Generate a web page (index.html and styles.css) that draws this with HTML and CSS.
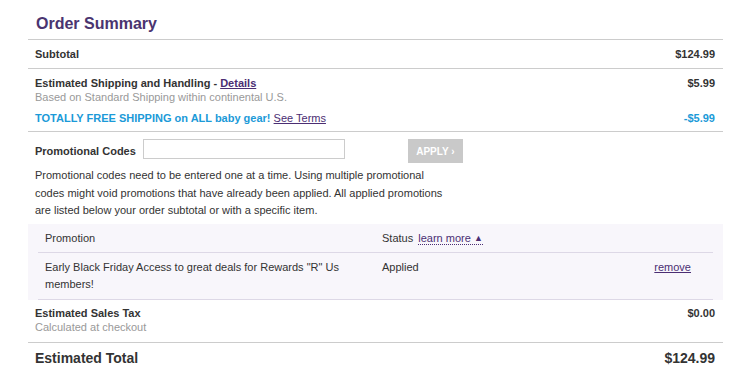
FILE: index.html
```html
<!DOCTYPE html>
<html lang="en">
<head>
    <meta charset="UTF-8">
    <title>Order Summary</title>
    <link rel="stylesheet" href="styles.css">
</head>
<body>
    <div class="summary">
        <h1>Order Summary</h1>

        <div class="row">
            <div class="row-label">Subtotal</div>
            <div class="row-value">$124.99</div>
        </div>

        <div class="row row-shipping">
            <div>
                <div class="row-label">Estimated Shipping and Handling - <a href="#" class="link-bold">Details</a></div>
                <div class="row-note">Based on Standard Shipping within continental U.S.</div>
            </div>
            <div class="row-value">$5.99</div>
        </div>
        <div class="row row-free">
            <div class="free-text">TOTALLY FREE SHIPPING on ALL baby gear! <a href="#" class="link">See Terms</a></div>
            <div class="row-value free-text">-$5.99</div>
        </div>

        <div class="promo">
            <div class="promo-form">
                <label for="promoCode" class="row-label promo-label">Promotional Codes</label>
                <input type="text" id="promoCode">
                <button type="button" class="apply-btn">APPLY ›</button>
            </div>
            <p class="promo-info">Promotional codes need to be entered one at a time. Using multiple promotional codes might void promotions that have already been applied. All applied promotions are listed below your order subtotal or with a specific item.</p>
        </div>

        <div class="promo-box">
            <div class="promo-row promo-head">
                <div>Promotion</div>
                <div>Status <a href="#" class="learn-more">learn more <span class="caret">&#9650;</span></a></div>
                <div></div>
            </div>
            <div class="promo-row promo-item">
                <div>Early Black Friday Access to great deals for Rewards "R" Us members!</div>
                <div>Applied</div>
                <div><a href="#" class="link">remove</a></div>
            </div>
        </div>

        <div class="row row-tax">
            <div>
                <div class="row-label">Estimated Sales Tax</div>
                <div class="row-note">Calculated at checkout</div>
            </div>
            <div class="row-value">$0.00</div>
        </div>

        <div class="row row-total">
            <div>Estimated Total</div>
            <div>$124.99</div>
        </div>
    </div>
</body>
</html>
```

FILE: styles.css
```css
body {
    margin: 0;
    font-family: "Liberation Sans", Arial, sans-serif;
    font-size: 11px;
    color: #333;
    background: #fff;
}
.summary {
    width: 695px;
    margin-left: 28px;
}
h1 {
    margin: 0;
    padding: 13px 8px 4px;
    height: 22px;
    line-height: 22px;
    font-size: 16px;
    font-weight: bold;
    color: #4a3470;
    border-bottom: 1px solid #ccc;
}
.row {
    display: flex;
    justify-content: space-between;
    padding: 7px 8px 7px 7px;
    line-height: 14px;
    border-bottom: 1px solid #ccc;
}
.row-label {
    font-weight: bold;
}
.row-value {
    font-weight: bold;
}
.row-note {
    color: #999;
}
.row-shipping {
    border-bottom: none;
    padding-bottom: 0;
}
.row-free {
    padding-bottom: 6px;
}
.free-text {
    color: #1b9ad8;
    font-weight: bold;
}
.link,
.link-bold {
    color: #4b2e73;
    text-decoration: underline;
}
.link {
    font-weight: normal;
}
.link-bold {
    font-weight: bold;
}
.promo {
    padding: 7px 8px 0 7px;
}
.promo-form {
    display: flex;
    align-items: flex-start;
}
.promo-label {
    line-height: 24px;
    margin-right: 7px;
}
.promo-form input {
    width: 202px;
    height: 20px;
    box-sizing: border-box;
    border: 1px solid #ccc;
    margin: 0;
    padding: 2px 4px;
    font-family: inherit;
    font-size: 11px;
}
.apply-btn {
    margin-left: 63px;
    width: 55px;
    height: 24px;
    border: none;
    background: #c9c9c9;
    color: #fff;
    font-family: inherit;
    font-size: 10px;
    font-weight: bold;
    padding: 0;
}
.promo-info {
    width: 420px;
    margin: 4px 0 0;
    line-height: 17.5px;
}
.promo-box {
    margin-top: 4px;
    background: #f8f6fb;
    padding: 0 10px;
}
.promo-row {
    display: grid;
    grid-template-columns: 337px 1fr auto;
    border-bottom: 1px solid #ddd8e6;
}
.promo-row > div {
    padding-left: 7px;
}
.promo-row > div:last-child {
    padding-right: 22px;
}
.promo-head {
    line-height: 14px;
    padding: 7px 0;
}
.promo-item {
    line-height: 17px;
    padding: 6px 0;
}
.promo-item > div:first-child {
    padding-right: 10px;
}
.learn-more {
    color: #4b2e73;
    text-decoration: none;
    border-bottom: 1px dotted #4b2e73;
    margin-left: 2px;
}
.caret {
    font-size: 9px;
    vertical-align: 1px;
}
.row-tax {
    padding-top: 6px;
    padding-bottom: 8px;
}
.row-total {
    border-bottom: none;
    padding-top: 6px;
    line-height: 18px;
    font-size: 14px;
    font-weight: bold;
}
```
